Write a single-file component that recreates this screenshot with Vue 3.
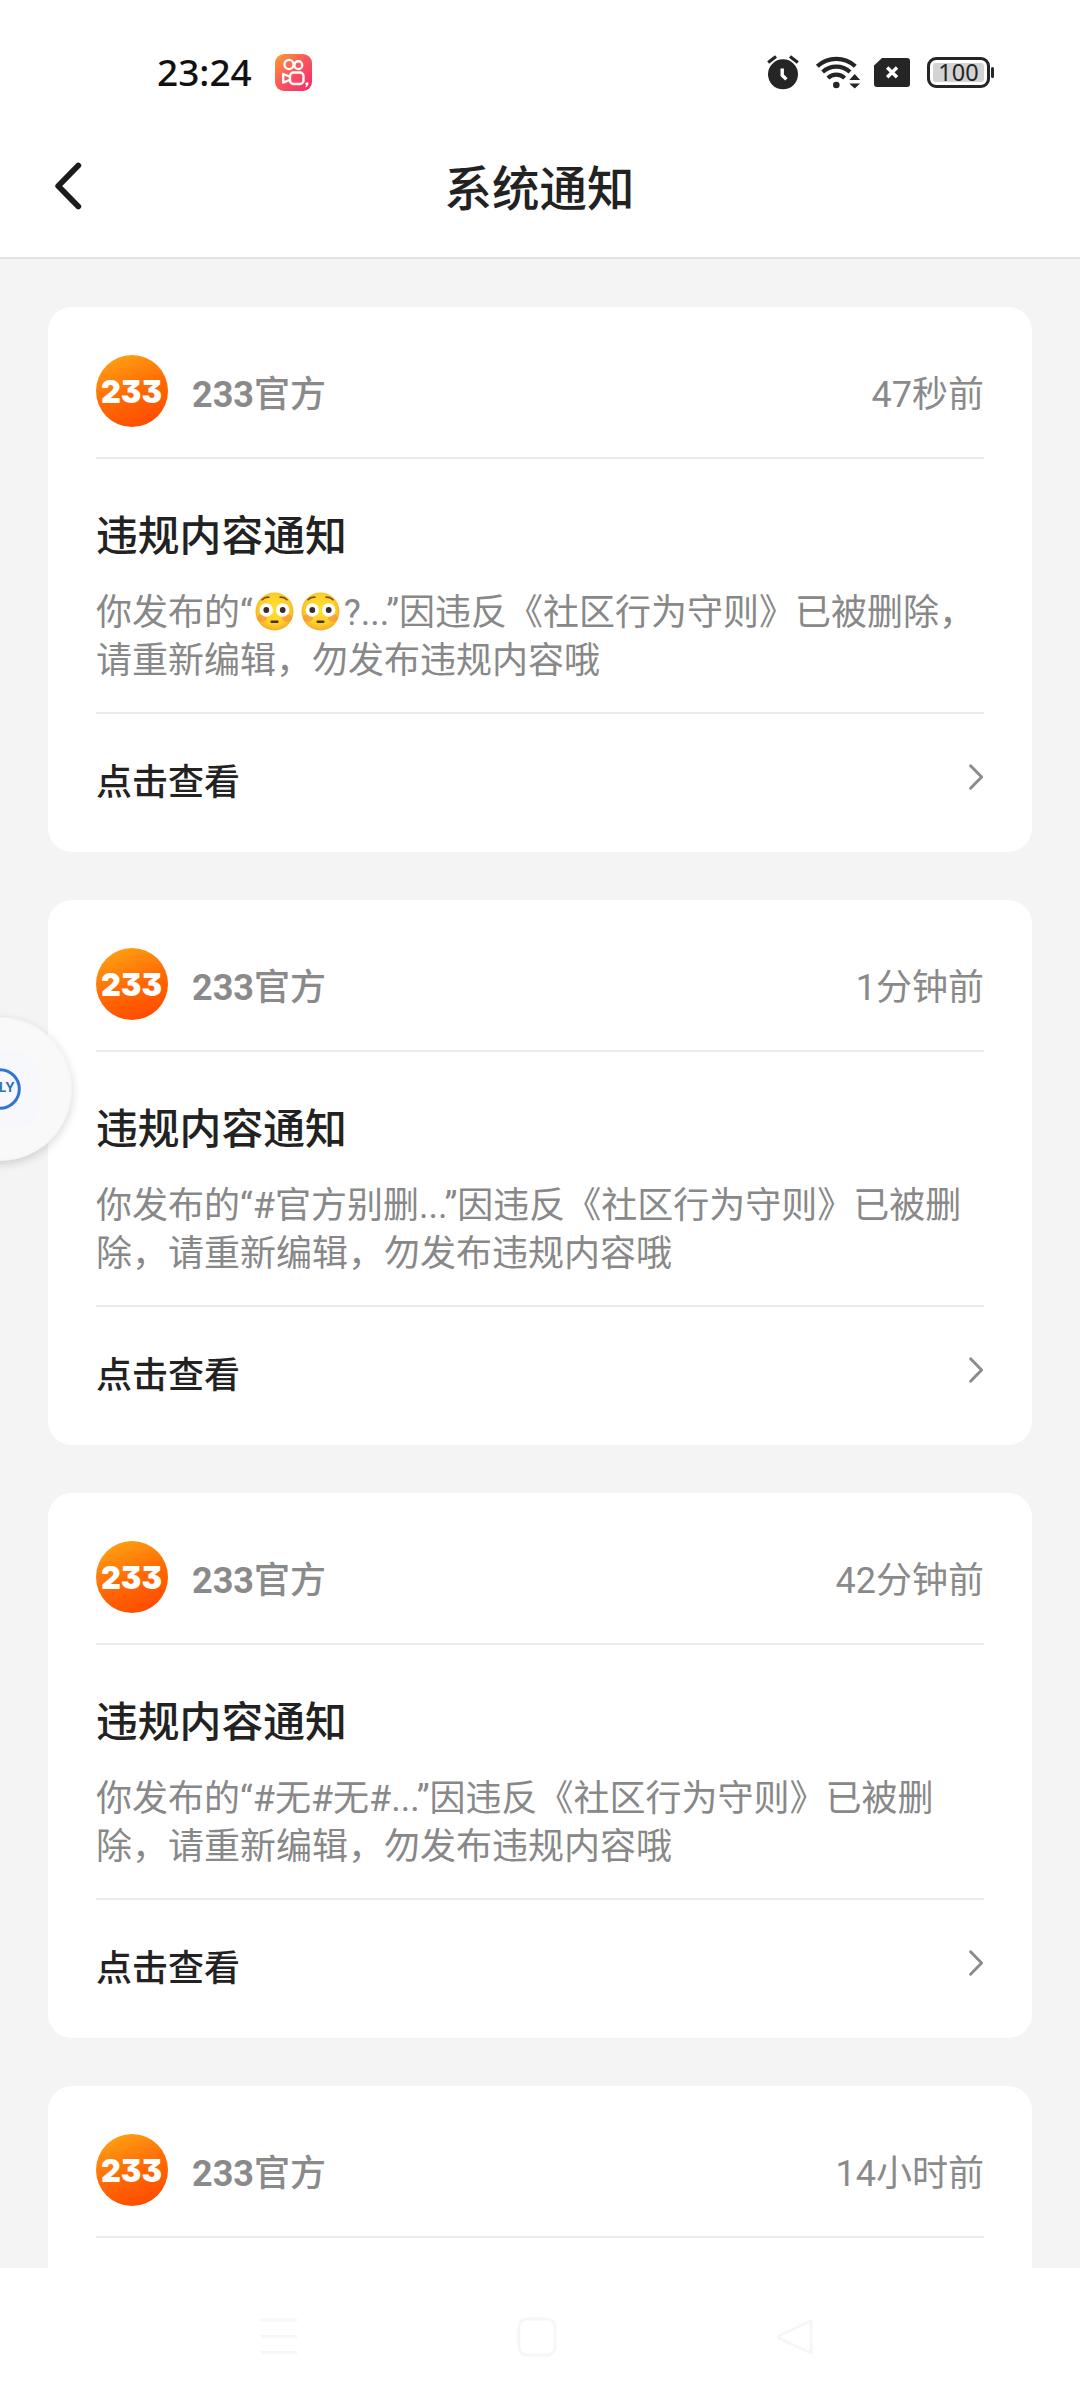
<script setup>
const notices = [
  { time: '47秒前', lines: ['你发布的“😳😳?...”因违反《社区行为守则》已被删除，', '请重新编辑，勿发布违规内容哦'] },
  { time: '1分钟前', lines: ['你发布的“#官方别删...”因违反《社区行为守则》已被删', '除，请重新编辑，勿发布违规内容哦'] },
  { time: '42分钟前', lines: ['你发布的“#无#无#...”因违反《社区行为守则》已被删', '除，请重新编辑，勿发布违规内容哦'] },
  { time: '14小时前', lines: [] },
]
// Splits a line into runs so the flushed face can be drawn as a vector.
const pieces = (line) => line.split(/(😳)/u).filter(Boolean)
</script>

<template>
  <div class="screen">
    <header class="status">
      <div class="status-left">
        <span class="clock">23:24</span>
        <svg class="kwai" width="37" height="37" viewBox="0 0 37 37">
          <defs>
            <linearGradient id="kw" x1="0" y1="0" x2="1" y2="1">
              <stop offset="0" stop-color="#ff9f2e" />
              <stop offset=".45" stop-color="#fa5a5c" />
              <stop offset="1" stop-color="#f5286a" />
            </linearGradient>
          </defs>
          <rect width="37" height="37" rx="9" fill="url(#kw)" />
          <g fill="none" stroke="#fff" stroke-width="2.4" stroke-linejoin="round">
            <circle cx="14" cy="10.500" r="4.600" />
            <circle cx="23.300" cy="11.200" r="3.900" />
            <rect x="15" y="18.500" width="13.500" height="11.500" rx="3.600" />
            <path d="M14.500 22.500L8.200 20v8.600l6.300-2.600" />
          </g>
          <path d="M30.500 28.500h3c0 2.600-.8 4-3 5l-.4-1c1-.6 1.200-1 1.200-1.600h-.8z" fill="#fff" />
        </svg>
      </div>
      <div class="status-right">
        <svg width="34" height="36" viewBox="0 0 34 36">
          <circle cx="17" cy="20.300" r="15" fill="#252525" />
          <path d="M2.200 8.600L10 2.400M31.800 8.600L24 2.400" stroke="#252525" stroke-width="3.200" />
          <path d="M16.200 14.500v6.700l4.200 4.200" fill="none" stroke="#fff" stroke-width="3.400" />
        </svg>
        <svg width="46" height="36" viewBox="0 0 46 36">
          <g fill="none" stroke="#252525" stroke-width="4.200">
            <path d="M2.300 12.300a28 28 0 0 1 38 0" />
            <path d="M7.600 18a20.400 20.400 0 0 1 27.400 0" />
            <path d="M12.900 24a12.400 12.400 0 0 1 16.800 0" />
          </g>
          <circle cx="21.300" cy="31" r="3.300" fill="#252525" />
          <path d="M34.300 26l5.400-6 5.400 6zM34.300 29.400l5.400 5.200 5.400-5.200z" fill="#252525" />
        </svg>
        <svg width="36" height="29" viewBox="0 0 36 29">
          <path d="M8 0h25a3 3 0 0 1 3 3v23a3 3 0 0 1-3 3H3a3 3 0 0 1-3-3V7.500z" fill="#252525" />
          <path d="M13.200 9.500l9.800 9.800M23 9.500l-9.800 9.800" stroke="#fff" stroke-width="3.400" />
        </svg>
        <div class="battery"><span class="level">100</span></div>
      </div>
    </header>

    <nav class="bar">
      <svg width="30" height="50" viewBox="0 0 30 50">
        <path d="M25.300 4.500L5.200 25l20.100 20.500" fill="none" stroke="#1c1c1c" stroke-width="5.800" stroke-linecap="round" stroke-linejoin="round" />
      </svg>
      <h1>系统通知</h1>
    </nav>

    <main class="list">
      <article v-for="n in notices" :key="n.time" class="card">
        <div class="head">
          <svg width="72" height="72" viewBox="0 0 72 72">
            <defs>
              <linearGradient id="av" x1=".2" y1="0" x2=".6" y2="1">
                <stop offset="0" stop-color="#ffa414" />
                <stop offset=".55" stop-color="#ff6a04" />
                <stop offset="1" stop-color="#ff4d00" />
              </linearGradient>
            </defs>
            <circle cx="36" cy="36" r="36" fill="url(#av)" />
            <text x="5" y="47.500" class="logo" textLength="61" lengthAdjust="spacingAndGlyphs">233</text>
          </svg>
          <span class="name"><b>233</b>官方</span>
          <span class="time">{{ n.time }}</span>
        </div>
        <template v-if="n.lines.length">
          <div class="body">
            <h2>违规内容通知</h2>
            <p>
              <span v-for="line in n.lines" :key="line" class="line"><template v-for="(p, i) in pieces(line)" :key="i"><svg v-if="p === '😳'" class="face" width="39" height="39" viewBox="0 0 39 39">
                <defs>
                  <radialGradient id="fc" cx=".5" cy=".45" r=".55">
                    <stop offset="0" stop-color="#ffe030" />
                    <stop offset=".7" stop-color="#fdd02c" />
                    <stop offset="1" stop-color="#f3ad26" />
                  </radialGradient>
                </defs>
                <circle cx="19.500" cy="19.500" r="19" fill="url(#fc)" />
                <ellipse cx="7" cy="26" rx="5" ry="3.800" fill="#f78a3a" opacity=".6" />
                <ellipse cx="32" cy="26" rx="5" ry="3.800" fill="#f78a3a" opacity=".6" />
                <circle cx="11.300" cy="18" r="6.700" fill="#fff" />
                <circle cx="27.700" cy="18" r="6.700" fill="#fff" />
                <circle cx="11.300" cy="18" r="2.900" fill="#3b2c2a" />
                <circle cx="27.700" cy="18" r="2.900" fill="#3b2c2a" />
                <path d="M7 7.800q3-3 7-2.600M32 7.800q-3-3-7-2.600" fill="none" stroke="#7a4a1c" stroke-width="1.600" stroke-linecap="round" />
                <rect x="15.500" y="28.500" width="8" height="2.600" rx="1" fill="#4a2f22" />
              </svg><template v-else>{{ p }}</template></template></span>
            </p>
          </div>
          <div class="foot">
            <span>点击查看</span>
            <svg width="16" height="28" viewBox="0 0 16 28">
              <path d="M2.600 2.800L13.600 14 2.600 25.200" fill="none" stroke="#8c8c8c" stroke-width="3" stroke-linecap="round" stroke-linejoin="round" />
            </svg>
          </div>
        </template>
      </article>
    </main>

    <footer class="sysnav">
      <svg width="40" height="40" viewBox="0 0 40 40"><path d="M2 3h36M2 19.500h36M2 35.500h36" /></svg>
      <svg width="40" height="40" viewBox="0 0 40 40"><rect x="2" y="2" width="36" height="36" rx="8" /></svg>
      <svg width="40" height="40" viewBox="0 0 40 40"><path d="M36 4v32L4.500 21.500q-2.500-1.500 0-3z" stroke-linejoin="round" /></svg>
    </footer>

    <div class="float">
      <div class="plate">
        <svg width="44" height="44" viewBox="0 0 44 44">
          <circle cx="22" cy="22" r="19.300" fill="none" stroke="#2f74d4" stroke-width="3" />
          <text x="21" y="25" class="fly">LY</text>
        </svg>
      </div>
    </div>
  </div>
</template>

<style>
body { margin: 0; background: #fff; }
</style>

<style scoped>
.screen {
  position: relative;
  display: flex;
  flex-direction: column;
  width: 1080px;
  height: 2400px;
  overflow: hidden;
  background: #fff;
  font-family: Roboto, "Noto Sans CJK SC", sans-serif;
  color: #222;
}
svg { display: block; flex: none; }
.status {
  display: flex;
  justify-content: space-between;
  align-items: center;
  height: 118px;
  padding: 26px 90px 0 157px;
  box-sizing: border-box;
}
.status-left { display: flex; align-items: center; gap: 20px; }
.clock { width: 98px; font-family: "Noto Sans", sans-serif; font-size: 37px; font-weight: 500; line-height: 44px; color: #111; white-space: nowrap; }
.status-right { display: flex; align-items: center; }
.status-right svg:nth-child(2) { margin-left: 15px; }
.status-right svg:nth-child(3) { margin-left: 13px; }
.battery {
  position: relative;
  width: 63px;
  height: 31px;
  margin-left: 17px;
  padding: 5px;
  box-sizing: border-box;
  border: 3px solid #252525;
  border-radius: 9px;
  background: #d3d3d3;
  box-shadow: inset 0 0 0 3px #fff;
  display: flex;
  align-items: center;
  justify-content: center;
}
.battery::after { content: ""; position: absolute; right: -7px; top: 7px; width: 3px; height: 11px; border-radius: 2px; background: #252525; }
.level { font-family: "Noto Sans", sans-serif; font-size: 23.5px; line-height: 24px; color: #252525; }
.bar {
  display: grid;
  grid-template-columns: 1fr auto 1fr;
  align-items: center;
  height: 141px;
  padding: 0 54px 0 53px;
  box-sizing: border-box;
  border-bottom: 2px solid #e2e2e2;
}
.bar svg { margin-top: -3px; }
h1 { margin: 4px 0 0; font-size: 47.5px; line-height: 60px; font-weight: 500; }
.list {
  display: flex;
  flex-direction: column;
  gap: 48px;
  height: 2009px;
  padding: 48px 48px 0;
  box-sizing: border-box;
  background: #f4f4f4;
  overflow: hidden;
}
.card {
  flex: none;
  height: 545px;
  padding: 0 48px;
  box-sizing: border-box;
  border-radius: 24px;
  background: #fff;
}
.head {
  display: flex;
  align-items: center;
  height: 152px;
  padding: 48px 0 30px;
  box-sizing: border-box;
  border-bottom: 2px solid #ebebeb;
  color: #8a8a8a;
  font-size: 36px;
  line-height: 48px;
}
.logo { font-family: Inter, sans-serif; font-size: 32px; font-weight: 900; fill: #fff; font-feature-settings: "cv09"; }
.name { margin: 7px 0 0 24px; font-weight: 500; }
.name b { font-weight: 700; }
.time { margin: 7px 0 0 auto; }
.body { height: 255px; padding-top: 48px; box-sizing: border-box; border-bottom: 2px solid #ebebeb; }
h2 { margin: 0; font-size: 41.8px; line-height: 60px; font-weight: 500; }
p { margin: 22px 0 0; font-size: 36px; line-height: 48px; color: #888; font-weight: 400; }
.line { display: block; height: 48px; white-space: nowrap; }
.face { display: inline-block; margin: 0 4px 0 2.500px; vertical-align: -6px; }
.foot {
  display: flex;
  justify-content: space-between;
  align-items: flex-start;
  padding-top: 45px;
  font-size: 36px;
  line-height: 48px;
  font-weight: 500;
}
.foot svg { margin-top: 4px; }
.sysnav { display: flex; justify-content: center; align-items: flex-start; gap: 218px; padding: 49px 7px 0 0; }
.sysnav svg { fill: none; stroke: #f6f6f6; stroke-width: 3; }
.float {
  position: absolute;
  left: -72px;
  top: 1017px;
  width: 144px;
  height: 144px;
  display: flex;
  align-items: center;
  justify-content: center;
  border-radius: 50%;
  background: #f9f9f9;
  box-shadow: 0 3px 10px rgba(0, 0, 0, .16), inset 0 0 3px #eee;
}
.plate { display: flex; align-items: center; justify-content: center; width: 76px; height: 76px; border-radius: 20px; background: #f7f8fb; }
.fly { font-family: Inter, sans-serif; font-size: 13px; font-weight: 700; fill: #2f6fb0; }
</style>
